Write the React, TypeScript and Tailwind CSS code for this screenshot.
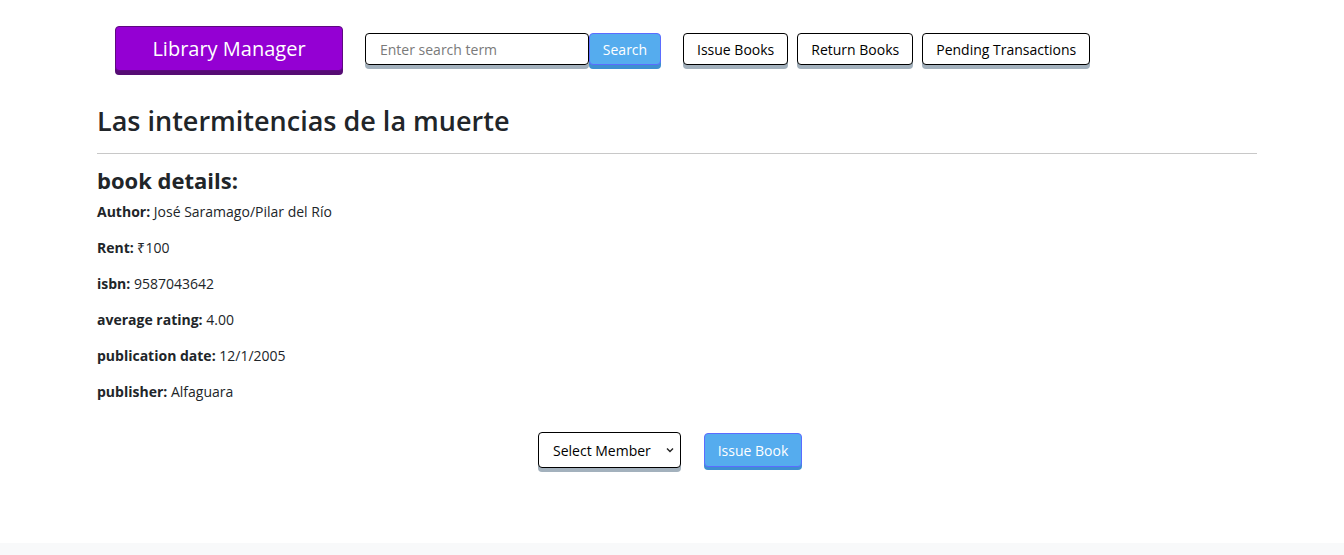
import React from 'react'

const navBtn =
  'h-8 px-[13px] bg-white border border-black rounded-[4px] text-[14px] text-black shadow-[0_4px_0_#a3b1bd]'

function Detail({ label, value }: { label: string; value: string }) {
  return (
    <p className="text-[14px] leading-5 mb-4 text-[#212529]">
      <b className="font-bold">{label}:</b> {value}
    </p>
  )
}

export default function App() {
  return (
    <div className="min-h-[555px] flex flex-col bg-white" style={{ fontFamily: '"Open Sans", sans-serif' }}>
      <div className="w-[1160px] ml-[97px] flex-1">
        {/* Header */}
        <nav className="flex items-start pl-[18px] pt-[26px]">
          <button className="w-[228px] h-[45px] bg-[#9400d3] border border-[#5e0a80] rounded-[4px] text-white text-[20px] shadow-[0_4px_0_#560c74]">
            Library Manager
          </button>
          <div className="flex ml-[22px] mt-[7px]">
            <input
              placeholder="Enter search term"
              className="w-[224px] h-8 px-[14px] border border-black rounded-[4px] text-[14px] outline-none shadow-[0_4px_0_#a3b1bd] placeholder:text-[#7a7a7a]"
            />
            <button className="w-[72px] h-8 bg-[#55acee] border border-[#5b6cff] rounded-[4px] text-white text-[14px] shadow-[0_4px_0_#3d8fd1]">
              Search
            </button>
          </div>
          <div className="flex gap-[9px] ml-[22px] mt-[7px]">
            <button className={navBtn}>Issue Books</button>
            <button className={navBtn}>Return Books</button>
            <button className={navBtn}>Pending Transactions</button>
          </div>
        </nav>

        {/* Title */}
        <h1 className="mt-[33px] text-[27px] leading-[34px] font-semibold text-[#212529]">
          Las intermitencias de la muerte
        </h1>
        <hr className="mt-[15px] border-t border-[#c8c8c8]" />

        <h2 className="mt-[13px] text-[22px] leading-[26px] font-bold text-[#212529]">book details:</h2>
        <div className="mt-[9px]">
          <Detail label="Author" value="José Saramago/Pilar del Río" />
          <Detail label="Rent" value="₹100" />
          <Detail label="isbn" value="9587043642" />
          <Detail label="average rating" value="4.00" />
          <Detail label="publication date" value="12/1/2005" />
          <Detail label="publisher" value="Alfaguara" />
        </div>

        <div className="flex justify-center items-center gap-[23px] mt-[30px] pr-[14px]">
          <div className="relative">
            <select className="appearance-none h-9 w-[143px] pl-[14px] bg-white border border-black rounded-[4px] text-[14px] text-black shadow-[0_4px_0_#a3b1bd]">
              <option>Select Member</option>
            </select>
            <svg
              className="absolute right-[7px] top-[15px] pointer-events-none"
              width="8"
              height="6"
              viewBox="0 0 8 6"
              fill="none"
              stroke="#222"
              strokeWidth="1.4"
            >
              <path d="M1 1.5l3 3 3-3" />
            </svg>
          </div>
          <button className="h-[34px] w-[98px] bg-[#55acee] border border-[#5b6cff] rounded-[4px] text-white text-[14px] shadow-[0_3px_0_#3d8fd1]">
            Issue Book
          </button>
        </div>
      </div>
      <footer className="h-[12px] bg-[#f8f9fa]" />
    </div>
  )
}
